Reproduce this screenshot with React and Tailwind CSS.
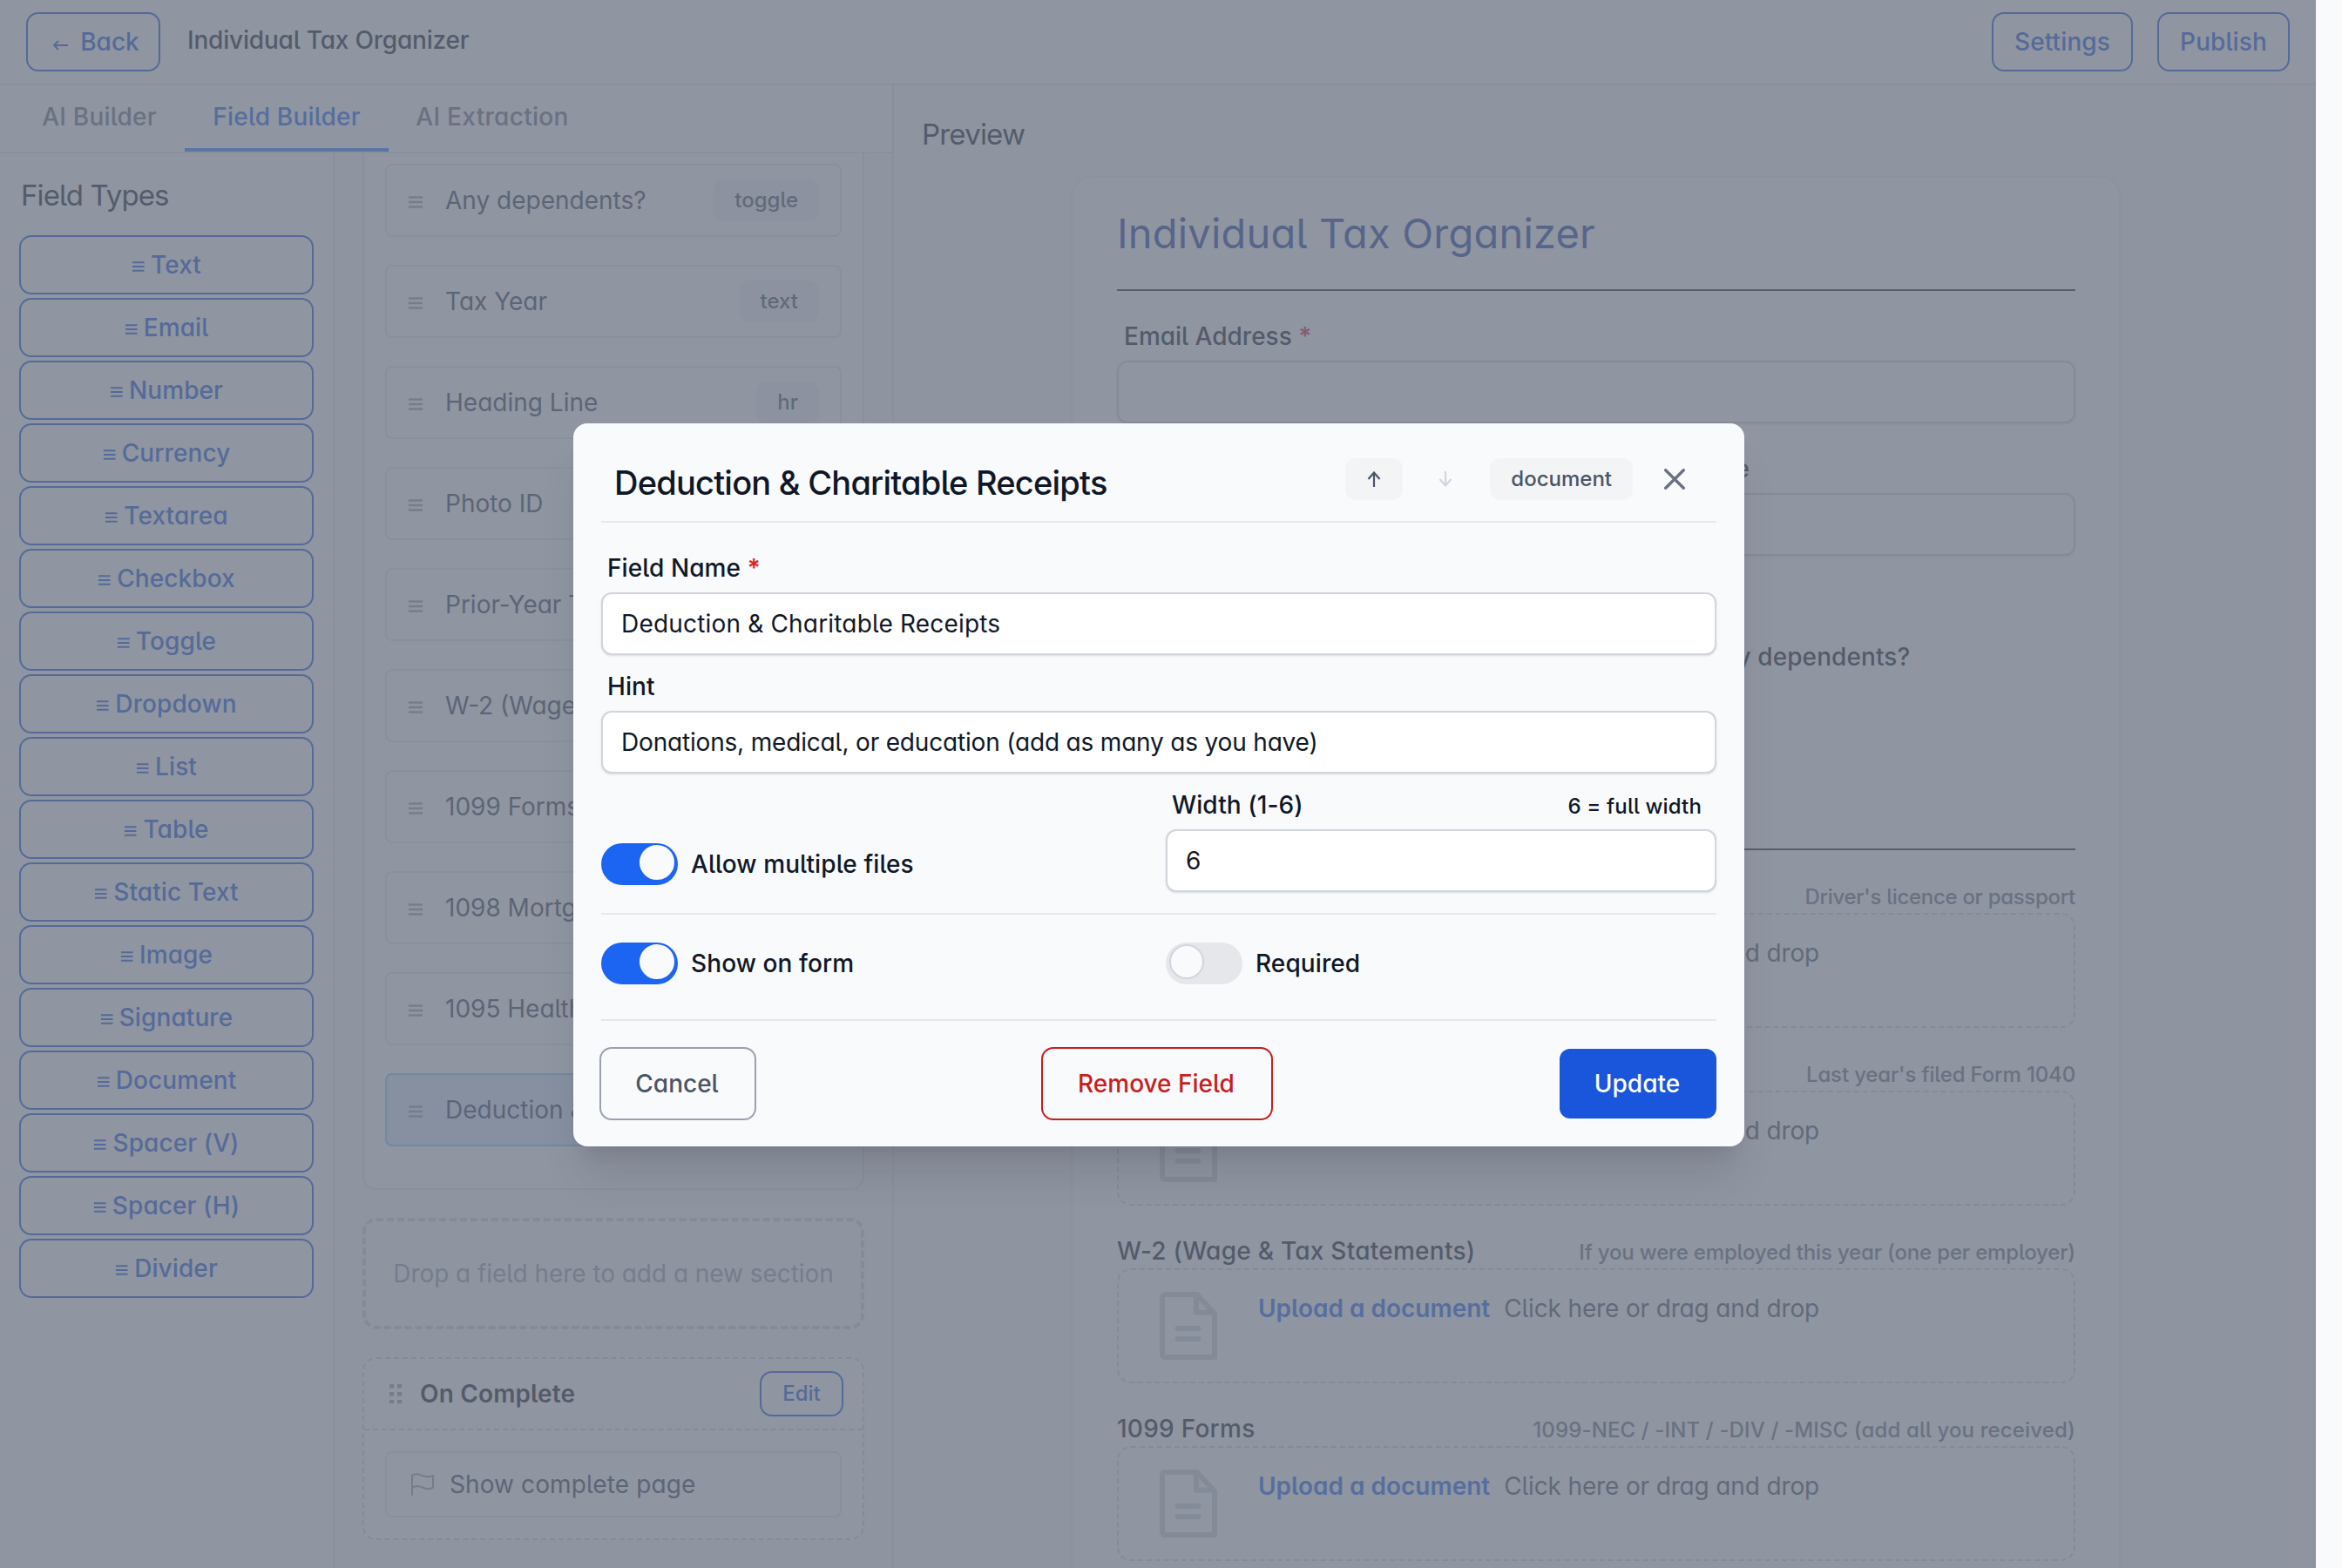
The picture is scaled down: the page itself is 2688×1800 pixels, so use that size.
import React, { useState } from 'react';

const fieldTypes = [
  'Text', 'Email', 'Number', 'Currency', 'Textarea', 'Checkbox', 'Toggle', 'Dropdown', 'List',
  'Table', 'Static Text', 'Image', 'Signature', 'Document', 'Spacer (V)', 'Spacer (H)', 'Divider',
];

const sectionFields = [
  { name: 'Any dependents?', type: 'toggle' },
  { name: 'Tax Year', type: 'text' },
  { name: 'Heading Line', type: 'hr' },
  { name: 'Photo ID', type: 'document' },
  { name: 'Prior-Year Tax', type: 'document' },
  { name: 'W-2 (Wage & Tax)', type: 'document' },
  { name: '1099 Forms', type: 'document' },
  { name: '1098 Mortgage', type: 'document' },
  { name: '1095 Health', type: 'document' },
  { name: 'Deduction & Gifts', type: 'document', selected: true },
];

const uploads = [
  { label: 'Photo ID', hint: "Driver's licence or passport", tracking: 'tracking-[-0.3px]' },
  { label: 'Prior-Year Tax Return', hint: "Last year's filed Form 1040", tracking: 'tracking-[-0.15px]' },
  { label: 'W-2 (Wage & Tax Statements)', hint: 'If you were employed this year (one per employer)', tracking: 'tracking-[-0.17px]' },
  { label: '1099 Forms', hint: '1099-NEC / -INT / -DIV / -MISC (add all you received)', tracking: 'tracking-[0.13px]' },
];

const BarsIcon = ({ className, thick }) => (
  <svg className={className} viewBox="0 0 16 14" fill="none" stroke="currentColor" strokeWidth={thick ? 2.6 : 2.2}>
    <path d={thick ? 'M0 1.5h16M0 7h16M0 12.5h16' : 'M1 2h14.5M1 7h14.5M1 12h14.5'} />
  </svg>
);

const ArrowIcon = ({ className }) => (
  <svg className={className} viewBox="0 0 16 18" fill="none" stroke="currentColor" strokeWidth="2.2">
    <path d="M8 18V2M1.500 9L8 1.500L14.500 9" />
  </svg>
);

const FileIcon = () => (
  <svg className="mt-px h-[78px] w-[66px] shrink-0 text-gray-300" viewBox="0 0 66 78" fill="none" stroke="currentColor" strokeWidth="6" strokeLinejoin="round">
    <path d="M6 3H43L63 25V75H6a3 3 0 0 1-3-3V6a3 3 0 0 1 3-3Z" />
    <path d="M42 3V23.500H63" />
    <path d="M20.500 42h24M20.500 54h24" strokeLinecap="round" />
  </svg>
);

const FlagIcon = () => (
  <svg className="size-8 shrink-0 text-gray-400" viewBox="0 0 24 24" fill="none" stroke="currentColor" strokeWidth="1.5" strokeLinecap="round" strokeLinejoin="round">
    <path d="M3 21V4.200Q5 3 7.500 3.200C11 3.500 12.500 5.500 16 5.500Q18.500 5.500 21 4.500V14.800Q18.500 16 16 15.800C12.500 15.500 11 13.500 7.500 13.500Q5 13.500 3 15" />
  </svg>
);

const OutlineButton = ({ children, className = '' }) => (
  <button className={`flex h-16 items-center justify-center rounded-xl font-medium text-[#1a56db] ring-2 ring-[#1a56db] ${className}`}>
    {children}
  </button>
);

const Badge = ({ children }) => (
  <span className="flex h-12 items-center rounded-xl bg-gray-100 px-6 text-[24px] font-medium text-gray-600">{children}</span>
);

const Header = () => (
  <header className="flex h-[98px] shrink-0 items-start border-b-2 border-gray-200 bg-white px-8 pt-4">
    <OutlineButton className="w-[150px] gap-3.5 pl-1.5">
      <svg className="mt-2 h-3 w-[18px]" viewBox="0 0 18 12" fill="none" stroke="currentColor" strokeWidth="1.800">
        <path d="M18 6H2M7 1L2 6l5 5" />
      </svg>
      Back
    </OutlineButton>
    <h1 className="mt-2.5 ml-[33px] font-medium tracking-[-0.2px] text-gray-900">Individual Tax Organizer</h1>
    <div className="ml-auto flex gap-8">
      <OutlineButton className="w-[158px] tracking-[0.1px]">Settings</OutlineButton>
      <OutlineButton className="w-[148px] tracking-[0.1px]">Publish</OutlineButton>
    </div>
  </header>
);

const Tabs = () => (
  <nav className="flex h-[78px] shrink-0 border-b-2 border-gray-200 bg-white px-4 font-medium tracking-[0.2px] text-gray-500">
    <a className="w-[196px] pt-4 text-center whitespace-nowrap">AI Builder</a>
    <a className="w-[234px] border-b-4 border-blue-500 pt-4 text-center whitespace-nowrap text-[#1c64f2]">Field Builder</a>
    <a className="w-[238px] pt-4 text-center tracking-[0.3px] whitespace-nowrap">AI Extraction</a>
  </nav>
);

const FieldTypes = () => (
  <aside className="w-[384px] shrink-0 border-r-2 border-gray-200 bg-white px-6 pt-6">
    <h2 className="text-[33px] leading-[48px] tracking-[-0.9px] text-gray-900">Field Types</h2>
    <div className="mt-6 flex w-[334px] flex-col gap-2">
      {fieldTypes.map((type) => (
        <OutlineButton key={type} className="gap-[7px] tracking-[0.1px]">
          <BarsIcon className="mt-1 h-3.5 w-[15px]" />
          {type}
        </OutlineButton>
      ))}
    </div>
  </aside>
);

const SectionList = () => (
  <div className="flex grow flex-col gap-8 overflow-hidden px-8">
    <div className="flex flex-col gap-8 rounded-b-2xl border-2 border-t-0 border-gray-200 bg-white px-6 pt-3 pb-12">
      {sectionFields.map((field) => (
        <div
          key={field.name}
          className={`flex h-[84px] shrink-0 items-center rounded-lg border-2 px-6 text-gray-700 ${field.selected ? 'border-blue-300 bg-blue-100' : 'border-gray-200 bg-white'}`}
        >
          <BarsIcon thick className="mt-1 mr-[26px] ml-px h-3.5 w-4 shrink-0 text-gray-400" />
          <span className="grow whitespace-nowrap">{field.name}</span>
          <Badge>{field.type}</Badge>
        </div>
      ))}
    </div>
    <div className="flex h-32 shrink-0 items-center justify-center rounded-2xl border-4 border-dashed border-gray-300 tracking-[-0.05px] text-gray-400">
      Drop a field here to add a new section
    </div>
    <div className="h-[210px] shrink-0 rounded-2xl border-2 border-dashed border-gray-300 bg-white">
      <div className="flex h-[82px] items-center border-b-2 border-dashed border-gray-300 px-6">
        <svg className="mr-5 ml-[5px] h-[22px] w-[15px] text-gray-400" viewBox="0 0 15 22" fill="currentColor">
          <path d="M0 0h5v4.500H0zM9 0h5v4.500H9zM0 9h5v4.500H0zM9 9h5v4.500H9zM0 18h5v4H0zM9 18h5v4H9z" />
        </svg>
        <span className="font-semibold tracking-[0.15px] text-gray-900">On Complete</span>
        <button className="ml-auto h-12 w-[92px] rounded-xl text-[24px] font-medium text-[#1a56db] ring-2 ring-[#1a56db]">Edit</button>
      </div>
      <div className="mx-6 mt-6 flex h-[76px] items-center gap-[15px] rounded-lg border-2 border-gray-200 px-[25px] tracking-[0.1px] text-gray-700">
        <FlagIcon />
        Show complete page
      </div>
    </div>
  </div>
);

const PreviewInput = () => (
  <div className="h-[72px] rounded-xl border-2 border-gray-300 bg-white shadow-sm" />
);

const Preview = () => (
  <main className="grow overflow-hidden border-l-2 border-gray-200 bg-gray-50 pt-8 pl-8">
    <h2 className="text-[33px] leading-[48px] tracking-[-0.8px] text-gray-900">Preview</h2>
    <div className="mt-6 ml-[172px] h-[1700px] w-[1204px] rounded-3xl border-2 border-gray-100 bg-white px-[50px] pt-[34px] shadow-sm">
      <h3 className="text-[47px] leading-[60px] tracking-[0.2px] text-[#1e429f]">Individual Tax Organizer</h3>
      <div className="mt-[34px] h-0.5 bg-gray-800" />
      <div className="mt-8 pl-2 font-medium text-gray-900">
        Email Address <span className="font-semibold text-[#e02424]">*</span>
      </div>
      <div className="mt-2">
        <PreviewInput />
      </div>
      <div className="mt-8 grid grid-cols-2 gap-4">
        <div>
          <div className="mb-2 pl-2 font-medium text-gray-900">Full Name</div>
          <PreviewInput />
        </div>
        <div>
          <div className="mb-2 w-[168px] text-right font-medium text-gray-900">Telephone</div>
          <PreviewInput />
        </div>
      </div>
      <div className="mt-24 flex h-10 pl-[675px] font-medium tracking-[0.1px] text-gray-900">Any dependents?</div>
      <div className="mt-[200px] h-0.5 bg-gray-800" />
      <div className="mt-8 flex flex-col gap-8">
        {uploads.map((upload) => (
          <div key={upload.label}>
            <div className="flex h-10 items-baseline justify-between">
              <span className="font-medium tracking-[0.25px] text-gray-900">{upload.label}</span>
              <span className={`text-[24px] font-medium text-gray-500 ${upload.tracking}`}>{upload.hint}</span>
            </div>
            <div className="flex h-[132px] rounded-2xl border-2 border-dashed border-gray-300 pt-6 pl-[47px]">
              <FileIcon />
              <p className="ml-[47px] tracking-[-0.15px] whitespace-nowrap text-gray-600">
                <span className="mr-4 font-semibold tracking-normal text-[#1c64f2]">Upload a document</span>
                Click here or drag and drop
              </p>
            </div>
          </div>
        ))}
      </div>
    </div>
  </main>
);

const Toggle = ({ label, checked, onChange }) => (
  <label className="flex h-12 items-center gap-[15px] font-medium tracking-[0.1px] text-gray-900">
    <input type="checkbox" className="hidden" checked={checked} onChange={onChange} />
    <span className={`flex h-12 w-[88px] items-start rounded-full px-1 pt-0.5 ${checked ? 'justify-end bg-[#1c64f2]' : 'bg-gray-200'}`}>
      <span className={`size-10 rounded-full border-2 bg-[#f9fafc] ${checked ? 'border-[#f9fafc]' : 'border-gray-300'}`} />
    </span>
    {label}
  </label>
);

const TextField = ({ label, required, note, value, className = '' }) => (
  <div>
    <div className="flex h-10 items-baseline justify-between pr-[17px] pl-[7px] font-medium tracking-[0.1px] text-gray-900">
      <span>
        {label} {required && <span className="font-semibold text-[#e02424]">*</span>}
      </span>
      {note && <span className="text-[24px] tracking-[0.15px]">{note}</span>}
    </div>
    <input
      className={`mt-2 block h-[72px] w-full rounded-xl border-2 border-gray-300 bg-white px-[21px] text-gray-900 shadow-sm outline-none ${className}`}
      defaultValue={value}
    />
  </div>
);

const FieldModal = () => {
  const [multiple, setMultiple] = useState(true);
  const [visible, setVisible] = useState(true);
  const [required, setRequired] = useState(false);

  return (
    <div className="absolute top-[486px] left-[658px] h-[830px] w-[1344px] rounded-2xl bg-[#f9fafc] px-8 shadow-[0_40px_50px_-10px_rgb(0_0_0/0.1),0_16px_20px_-12px_rgb(0_0_0/0.1)]">
      <div className="flex h-[114px] items-start border-b-2 border-gray-200 pt-10 pr-9 pl-[15px]">
        <h2 className="text-[38px] leading-[56px] font-medium tracking-[-0.77px] text-gray-900">Deduction &amp; Charitable Receipts</h2>
        <button className="ml-auto flex h-12 w-[66px] items-center justify-center rounded-xl bg-gray-100 text-gray-600">
          <ArrowIcon className="h-[18px] w-4" />
        </button>
        <button className="mr-[18px] ml-4 flex h-12 w-[66px] items-center justify-center text-gray-300">
          <ArrowIcon className="h-[18px] w-4 rotate-180" />
        </button>
        <Badge>document</Badge>
        <svg className="mt-3 ml-9 size-6 text-gray-500" viewBox="0 0 24 24" fill="none" stroke="currentColor" strokeWidth="3.4" strokeLinecap="round">
          <path d="M1.700 1.700l20.600 20.600M22.300 1.700L1.700 22.300" />
        </svg>
      </div>
      <div className="flex flex-col gap-4 pt-8">
        <TextField label="Field Name" required value="Deduction & Charitable Receipts" className="tracking-[0.18px]" />
        <TextField label="Hint" value="Donations, medical, or education (add as many as you have)" className="tracking-[-0.18px]" />
      </div>
      <div className="mt-4 grid grid-cols-2 gap-4 border-b-2 border-gray-200 pb-6">
        <div className="flex items-end pb-2">
          <Toggle label="Allow multiple files" checked={multiple} onChange={() => setMultiple(!multiple)} />
        </div>
        <TextField label="Width (1-6)" note="6 = full width" value="6" />
      </div>
      <div className="grid h-[122px] grid-cols-2 gap-4 border-b-2 border-gray-200 pt-8">
        <Toggle label="Show on form" checked={visible} onChange={() => setVisible(!visible)} />
        <Toggle label="Required" checked={required} onChange={() => setRequired(!required)} />
      </div>
      <div className="flex justify-between pt-8 font-medium">
        <button className="h-20 w-44 rounded-xl pr-0.5 text-gray-600 ring-2 ring-gray-400">Cancel</button>
        <button className="h-20 w-[262px] rounded-xl pr-0.5 text-[#c81e1e] ring-2 ring-[#c81e1e]">Remove Field</button>
        <button className="h-20 w-[180px] rounded-xl bg-[#1a56db] pr-0.5 text-white">Update</button>
      </div>
    </div>
  );
};

const App = () => (
  <div className="relative h-[1800px] w-[2688px] overflow-hidden bg-[#f9fafc] font-['Inter','Liberation_Sans',sans-serif] text-[28px] leading-[40px] [font-feature-settings:'cv11','cv05']">
    <div className="flex h-full w-[2658px] flex-col">
      <Header />
      <div className="flex min-h-0 grow">
        <div className="flex w-[1024px] shrink-0 flex-col bg-gray-50">
          <Tabs />
          <div className="flex min-h-0 grow">
            <FieldTypes />
            <SectionList />
          </div>
        </div>
        <Preview />
      </div>
    </div>
    <div className="absolute inset-y-0 left-0 w-[2658px] bg-gray-500/75" />
    <FieldModal />
  </div>
);

export default App;
